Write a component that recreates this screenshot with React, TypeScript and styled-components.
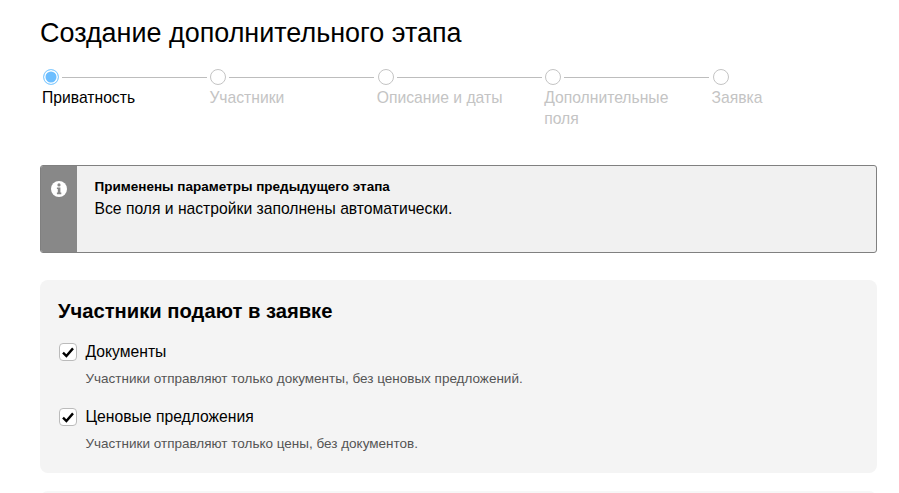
import React from 'react';
import styled, { createGlobalStyle } from 'styled-components';

const steps = [
  { title: 'Приватность', active: true },
  { title: 'Участники' },
  { title: 'Описание и даты' },
  { title: 'Дополнительные поля' },
  { title: 'Заявка', last: true },
];

const options = [
  { label: 'Документы', hint: 'Участники отправляют только документы, без ценовых предложений.' },
  { label: 'Ценовые предложения', hint: 'Участники отправляют только цены, без документов.' },
];

const App = () => {
  return (
    <Page>
      <GlobalStyle />
      <Title>Создание дополнительного этапа</Title>

      <Stepper>
        {steps.map((step) => (
          <Step key={step.title}>
            <StepHead>
              <Dot $active={step.active} />
              {!step.last && <Line />}
            </StepHead>
            <StepLabel $active={step.active}>{step.title}</StepLabel>
          </Step>
        ))}
      </Stepper>

      <Notice>
        <NoticeSide>
          <svg width="16" height="16" viewBox="0 0 16 16">
            <circle cx="8" cy="8" r="8" fill="#fff" />
            <circle cx="8" cy="3.9" r="1.6" fill="#888" />
            <path d="M5.9 6.5 H9.4 V11.6 H10.3 V13.2 H5.9 V11.6 H6.8 V8.1 H5.9 Z" fill="#888" />
          </svg>
        </NoticeSide>
        <NoticeBody>
          <NoticeTitle>Применены параметры предыдущего этапа</NoticeTitle>
          <NoticeText>Все поля и настройки заполнены автоматически.</NoticeText>
        </NoticeBody>
      </Notice>

      <Card>
        <CardTitle>Участники подают в заявке</CardTitle>
        {options.map((option) => (
          <Option key={option.label}>
            <OptionRow>
              <CheckBox>
                <svg width="12" height="11" viewBox="0 0 12 11">
                  <path d="M1 5.6 L4.4 9 L11 1.4" fill="none" stroke="#000" strokeWidth="2.4" />
                </svg>
              </CheckBox>
              <OptionLabel>{option.label}</OptionLabel>
            </OptionRow>
            <OptionHint>{option.hint}</OptionHint>
          </Option>
        ))}
      </Card>

      <NextCard />
    </Page>
  );
};

const GlobalStyle = createGlobalStyle`
  html, body {
    margin: 0;
    padding: 0;
    background: #fff;
    overflow: hidden;
  }
  body {
    font-family: "Liberation Sans", Arial, sans-serif;
    color: #000;
  }
`;

const Page = styled.div`
  width: 837px;
  height: 493px;
  margin-left: 40px;
  padding-top: 18px;
  box-sizing: border-box;
  overflow: hidden;
`;

const Title = styled.h1`
  margin: 0;
  font-size: 26.95px;
  line-height: 30px;
  font-weight: 400;
`;

const Stepper = styled.div`
  display: flex;
  margin-top: 21px;
  height: 66px;
`;

const Step = styled.div`
  width: 167.4px;
  flex: none;
`;

const StepHead = styled.div`
  display: flex;
  align-items: center;
  padding-left: 3px;
  height: 16px;
`;

const Dot = styled.span<{ $active?: boolean }>`
  flex: none;
  width: 16px;
  height: 16px;
  box-sizing: border-box;
  border-radius: 50%;
  border: ${(p) => (p.$active ? '1.5px solid #8ccfff' : '1px solid #c4c4c4')};
  background: ${(p) => (p.$active ? '#6cbeff' : '#fff')};
  box-shadow: ${(p) => (p.$active ? 'inset 0 0 0 1.5px #fff' : 'none')};
`;

const Line = styled.span`
  flex: none;
  width: 145px;
  height: 1px;
  margin-left: 3px;
  background: #bdbdbd;
`;

const StepLabel = styled.div<{ $active?: boolean }>`
  width: 135px;
  margin: 2px 0 0 2px;
  font-size: 15.7px;
  line-height: 21px;
  color: ${(p) => (p.$active ? '#000' : '#c4c4c4')};
`;

const Notice = styled.div`
  display: flex;
  margin-top: 30px;
  height: 88px;
  box-sizing: border-box;
  border: 1px solid #808080;
  border-radius: 3px;
  background: #f1f1f1;
  overflow: hidden;
`;

const NoticeSide = styled.div`
  flex: none;
  width: 36px;
  background: #888;
  display: flex;
  justify-content: center;
  padding-top: 15px;
  box-sizing: border-box;
`;

const NoticeBody = styled.div`
  padding: 13px 0 0 17.5px;
`;

const NoticeTitle = styled.div`
  font-size: 13.5px;
  line-height: 16px;
  font-weight: 700;
`;

const NoticeText = styled.div`
  margin-top: 5px;
  font-size: 15.7px;
  line-height: 18px;
`;

const Card = styled.div`
  margin-top: 27px;
  height: 193px;
  box-sizing: border-box;
  padding: 20px 18px 0;
  border-radius: 8px;
  background: #f4f4f4;
`;

const CardTitle = styled.h2`
  margin: 0 0 21px;
  font-size: 20.2px;
  line-height: 22px;
  font-weight: 700;
`;

const Option = styled.div`
  height: 65px;
`;

const OptionRow = styled.div`
  display: flex;
  align-items: center;
  height: 18px;
`;

const CheckBox = styled.span`
  flex: none;
  display: flex;
  align-items: center;
  justify-content: center;
  width: 18px;
  height: 18px;
  margin-left: 1px;
  box-sizing: border-box;
  border: 1px solid #bbb;
  border-radius: 4px;
  background: #fff;
`;

const OptionLabel = styled.span`
  margin-left: 8.5px;
  font-size: 15.7px;
  line-height: 18px;
`;

const OptionHint = styled.div`
  margin: 10px 0 0 27.5px;
  font-size: 13.5px;
  line-height: 16px;
  color: #555;
`;

const NextCard = styled.div`
  margin-top: 18px;
  height: 40px;
  border-radius: 8px;
  background: #f7f7f7;
`;

export default App;
